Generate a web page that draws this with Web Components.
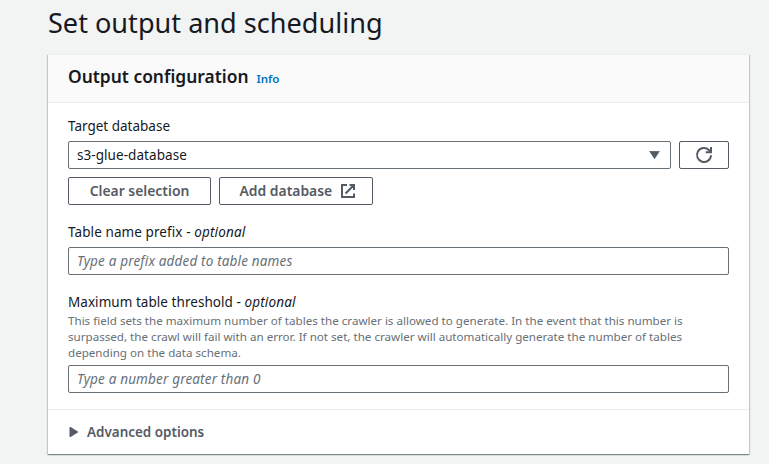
<!DOCTYPE html>
<html lang="en">
<head>
<meta charset="utf-8">
<title>Set output and scheduling</title>
<style>
html { height: 100%; overflow: hidden; }
body { margin: 0; height: 100%; background: #f2f3f3; color: #16191f; font: 13.5px/20px "Noto Sans", "Open Sans", sans-serif; }
</style>
</head>
<body>
<crawler-page></crawler-page>
<script>
const define = (name, html) => {
  const template = document.createElement('template');
  template.innerHTML = html;
  customElements.define(name, class extends HTMLElement {
    constructor() {
      super();
      this.attachShadow({ mode: 'open' }).append(template.content.cloneNode(true));
    }
  });
};

define('ui-panel', `
<style>
:host { display: block; box-sizing: border-box; width: 701px; height: 400px; background: #fff; border-top: 1px solid #eaeded; box-shadow: 0 1px 1px 0 rgba(0,28,36,.3), 1px 1px 1px 0 rgba(0,28,36,.15), -1px 1px 1px 0 rgba(0,28,36,.15); }
header { box-sizing: border-box; height: 48px; padding: 10px 20px 0; display: flex; align-items: baseline; gap: 8px; background: #fafafa; border-bottom: 1px solid #eaeded; }
h2 { margin: 0; font-size: 17.4px; line-height: 22px; font-weight: 600; }
.body { height: 306px; box-sizing: border-box; padding: 13px 20px 0; }
footer { height: 45px; border-top: 1px solid #eaeded; }
</style>
<header><h2><slot name="title"></slot></h2><slot name="info"></slot></header>
<div class="body"><slot></slot></div>
<footer><slot name="footer"></slot></footer>`);

define('ui-info', `
<style>:host { display: block; color: #0073bb; font-size: 11.5px; line-height: 16px; font-weight: 600; }</style>
<slot></slot>`);

define('form-field', `
<style>
:host { display: block; }
.label { line-height: 20px; letter-spacing: var(--label-spacing, 0); }
.hint { font-size: 11.62px; line-height: 16px; color: #687078; white-space: nowrap; }
.control { padding-top: 5px; }
:host([hinted]) .hint { padding-top: 1px; }
:host([hinted]) .control { padding-top: 4px; }
</style>
<div class="label"><slot name="label"></slot></div>
<div class="hint"><slot name="hint"></slot></div>
<div class="control"><slot></slot></div>`);

define('text-input', `
<style>
:host { display: block; box-sizing: border-box; height: 28px; border: 1px solid #687078; border-radius: 2px; background: #fff; padding: 3px 8px; line-height: 20px; color: #687078; font-style: italic; letter-spacing: .16px; }
</style><slot></slot>`);

define('select-box', `
<style>
:host { display: flex; flex: 1; box-sizing: border-box; height: 28px; border: 1px solid #687078; border-radius: 2px; background: #fff; padding: 3px 10px 3px 8px; align-items: center; justify-content: space-between; line-height: 20px; letter-spacing: .06px; }
svg { display: block; }
</style><slot></slot>
<svg width="11" height="8" viewBox="0 0 11 8"><path d="M.6.3h9.8L5.5 7.7z" fill="#545b64" stroke="#545b64" stroke-width=".6" stroke-linejoin="round"/></svg>`);

define('ui-button', `
<style>
:host { display: inline-flex; box-sizing: border-box; height: 28px; border: 1px solid #545b64; border-radius: 2px; background: #fff; color: #545b64; padding: 0 20px; align-items: center; justify-content: center; gap: 8px; font-size: 13.9px; font-weight: 600; white-space: nowrap; }
:host([icon]) { width: 50px; padding: 0; }
:host([trailing]) { justify-content: flex-start; padding: 0 0 0 19.5px; }
</style><slot></slot>`);

define('icon-external', `
<style>:host, svg { display: block; }</style>
<svg width="16" height="16" viewBox="0 0 16 16" fill="none" stroke="#545b64" stroke-width="2"><path d="M7 2H2v12h12v-3.5M9.5 2H14v5M13.8 2.2 5.5 10.5"/></svg>`);

define('icon-refresh', `
<style>:host, svg { display: block; }</style>
<svg width="18" height="18" viewBox="0 0 18 18" fill="none" stroke="#545b64" stroke-width="2"><path d="M16 9.2a7 7 0 1 1-2.2-5.3l1.6 1.7"/><path d="M16 1v5.2h-5.3"/></svg>`);

define('expand-section', `
<style>
:host { display: flex; align-items: center; gap: 8px; height: 44px; padding-left: 21px; color: #545b64; font-size: 13.45px; font-weight: 600; }
svg { display: block; }
</style>
<svg width="10" height="12" viewBox="0 0 10 12"><path d="M1 1.2v9.6L8.8 6z" fill="#545b64" stroke="#545b64" stroke-linejoin="round"/></svg><slot></slot>`);

define('crawler-page', `
<style>
:host { display: block; padding: 5px 0 0 48px; }
h1 { margin: 0 0 13px; font-size: 27.1px; line-height: 36px; font-weight: 400; }
i { letter-spacing: .15px; }
.row, .actions { display: flex; gap: 8px; }
.actions { margin-top: 8px; }
.prefix { margin-top: 17px; --label-spacing: .09px; }
.threshold { margin-top: 17px; --label-spacing: .05px; }
</style>
<h1>Set output and scheduling</h1>
<ui-panel>
  <span slot="title">Output configuration</span>
  <ui-info slot="info">Info</ui-info>
  <form-field>
    <span slot="label">Target database</span>
    <div class="row"><select-box>s3-glue-database</select-box><ui-button icon><icon-refresh></icon-refresh></ui-button></div>
  </form-field>
  <div class="actions">
    <ui-button style="width:143px">Clear selection</ui-button>
    <ui-button trailing style="width:154px">Add database <icon-external></icon-external></ui-button>
  </div>
  <form-field class="prefix">
    <span slot="label">Table name prefix - <i>optional</i></span>
    <text-input>Type a prefix added to table names</text-input>
  </form-field>
  <form-field class="threshold" hinted>
    <span slot="label">Maximum table threshold - <i>optional</i></span>
    <span slot="hint">This field sets the maximum number of tables the crawler is allowed to generate. In the event that this number is<br>surpassed, the crawl will fail with an error. If not set, the crawler will automatically generate the number of tables<br>depending on the data schema.</span>
    <text-input>Type a number greater than 0</text-input>
  </form-field>
  <expand-section slot="footer">Advanced options</expand-section>
</ui-panel>`);
</script>
</body>
</html>
